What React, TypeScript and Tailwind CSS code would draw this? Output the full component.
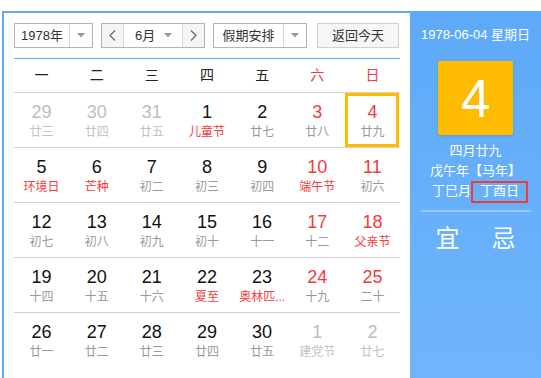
import React from 'react';

type Day = { d: number; l: string; other?: boolean; fest?: boolean };

const rows: Day[][] = [
  [
    { d: 29, l: '廿三', other: true },
    { d: 30, l: '廿四', other: true },
    { d: 31, l: '廿五', other: true },
    { d: 1, l: '儿童节', fest: true },
    { d: 2, l: '廿七' },
    { d: 3, l: '廿八' },
    { d: 4, l: '廿九' },
  ],
  [
    { d: 5, l: '环境日', fest: true },
    { d: 6, l: '芒种', fest: true },
    { d: 7, l: '初二' },
    { d: 8, l: '初三' },
    { d: 9, l: '初四' },
    { d: 10, l: '端午节', fest: true },
    { d: 11, l: '初六' },
  ],
  [
    { d: 12, l: '初七' },
    { d: 13, l: '初八' },
    { d: 14, l: '初九' },
    { d: 15, l: '初十' },
    { d: 16, l: '十一' },
    { d: 17, l: '十二' },
    { d: 18, l: '父亲节', fest: true },
  ],
  [
    { d: 19, l: '十四' },
    { d: 20, l: '十五' },
    { d: 21, l: '十六' },
    { d: 22, l: '夏至', fest: true },
    { d: 23, l: '奥林匹...', fest: true },
    { d: 24, l: '十九' },
    { d: 25, l: '二十' },
  ],
  [
    { d: 26, l: '廿一' },
    { d: 27, l: '廿二' },
    { d: 28, l: '廿三' },
    { d: 29, l: '廿四' },
    { d: 30, l: '廿五' },
    { d: 1, l: '建党节', other: true },
    { d: 2, l: '廿七', other: true },
  ],
];

const weekdays = ['一', '二', '三', '四', '五', '六', '日'];

const Caret = () => (
  <svg width="8" height="5" viewBox="0 0 8 5">
    <path d="M0 0 L8 0 L4 4.5 Z" fill="#999" />
  </svg>
);

const Chevron = ({ dir }: { dir: 'l' | 'r' }) => (
  <svg width="7" height="11" viewBox="0 0 7 11">
    <path
      d={dir === 'l' ? 'M6 0.5 L1 5.5 L6 10.5' : 'M1 0.5 L6 5.5 L1 10.5'}
      fill="none"
      stroke="#666"
      strokeWidth="1.2"
    />
  </svg>
);

export default function App() {
  return (
    <div
      className="w-[541px] h-[378px] overflow-hidden bg-white pt-[11px] pl-[2px]"
      style={{ fontFamily: '"Liberation Sans", "Noto Sans CJK SC", sans-serif' }}
    >
      <div className="flex border-l-2 border-t-2 border-[#5eaaf8] h-[400px]">
        {/* left: calendar */}
        <div className="w-[406px] shrink-0 px-[10px] pt-[10px]">
          <div className="flex h-[25px] text-[13px] leading-[23px] text-[#333]">
            <div className="flex w-[79px] border border-[#b4b4b4] bg-white">
              <div className="w-[54px] text-center">1978年</div>
              <div className="flex flex-1 items-center justify-center border-l border-[#d8d8d8]">
                <Caret />
              </div>
            </div>
            <div className="ml-[8px] flex w-[104px] border border-[#b4b4b4] bg-white">
              <div className="flex w-[22px] items-center justify-center bg-[#f5f5f5] border-r border-[#d8d8d8]">
                <Chevron dir="l" />
              </div>
              <div className="flex flex-1 items-center justify-between pl-[11px] pr-[10px]">
                <span>6月</span>
                <Caret />
              </div>
              <div className="flex w-[22px] items-center justify-center bg-[#f5f5f5] border-l border-[#d8d8d8]">
                <Chevron dir="r" />
              </div>
            </div>
            <div className="ml-[8px] flex w-[94px] border border-[#b4b4b4] bg-white">
              <div className="w-[69px] text-center">假期安排</div>
              <div className="flex flex-1 items-center justify-center border-l border-[#d8d8d8]">
                <Caret />
              </div>
            </div>
            <div className="ml-[10px] w-[82px] border border-[#d0d0d0] bg-[#f6f6f6] text-center">
              返回今天
            </div>
          </div>

          <div className="mt-[10px] border-t border-[#5eaaf8]" />
          <div className="grid grid-cols-7 h-[34px] border-b border-[#d0d0d0] text-[14px] leading-[33px]">
            {weekdays.map((w, i) => (
              <div key={w} className={`text-center ${i >= 5 ? 'text-[#f33b3b]' : 'text-[#222]'}`}>
                {w}
              </div>
            ))}
          </div>

          {rows.map((row, ri) => (
            <div
              key={ri}
              className={`grid grid-cols-7 h-[55px] ${ri < rows.length - 1 ? 'border-b border-[#d0d0d0]' : ''}`}
            >
              {row.map((c, ci) => {
                const weekend = ci >= 5;
                const today = ri === 0 && ci === 6;
                const numColor = c.other
                  ? 'text-[#bdbdbd]'
                  : weekend
                  ? 'text-[#f33b3b]'
                  : 'text-[#111]';
                const lunarColor = c.other
                  ? 'text-[#c2c2c2]'
                  : c.fest
                  ? 'text-[#f33b3b]'
                  : 'text-[#999]';
                return (
                  <div key={ci} className="relative flex flex-col items-center pt-[9px]">
                    {today && (
                      <div className="absolute left-0 right-[1px] top-0 bottom-0 border-[3px] border-[#ffbb00]" />
                    )}
                    <div className={`text-[18px] leading-[20px] ${numColor}`}>{c.d}</div>
                    <div className={`mt-[2px] whitespace-nowrap text-[12px] leading-[16px] ${lunarColor}`}>
                      {c.l}
                    </div>
                  </div>
                );
              })}
            </div>
          ))}
        </div>

        {/* right: detail panel */}
        <div className="w-[131px] shrink-0 flex flex-col items-center bg-gradient-to-b from-[#5eaaf8] to-[#70b6fb] pt-[14px] text-white">
          <div className="text-[13px] leading-[16px] whitespace-nowrap">1978-06-04 星期日</div>
          <div className="mt-[18px] flex h-[74px] w-[75px] items-center justify-center rounded-[2px] bg-[#ffbb00] shadow-[0_1px_3px_rgba(0,0,0,0.15)]">
            <span className="text-[53px] leading-none">4</span>
          </div>
          <div className="mt-[6px] text-[13px] leading-[20px] text-center whitespace-nowrap">
            <div>四月廿九</div>
            <div>戊午年【马年】</div>
            <div>
              <span>丁巳月</span>
              <span className="relative ml-[9px]">
                丁酉日
                <span className="absolute -left-[9px] -right-[9px] -top-[2px] -bottom-[5px] border-2 border-[#f23a3a]" />
              </span>
            </div>
          </div>
          <div className="mt-[9px] h-[2px] w-[110px] bg-white/30" />
          <div className="mt-[13px] flex w-[80px] justify-between text-[24px] leading-[28px]">
            <span>宜</span>
            <span>忌</span>
          </div>
        </div>
      </div>
    </div>
  );
}
